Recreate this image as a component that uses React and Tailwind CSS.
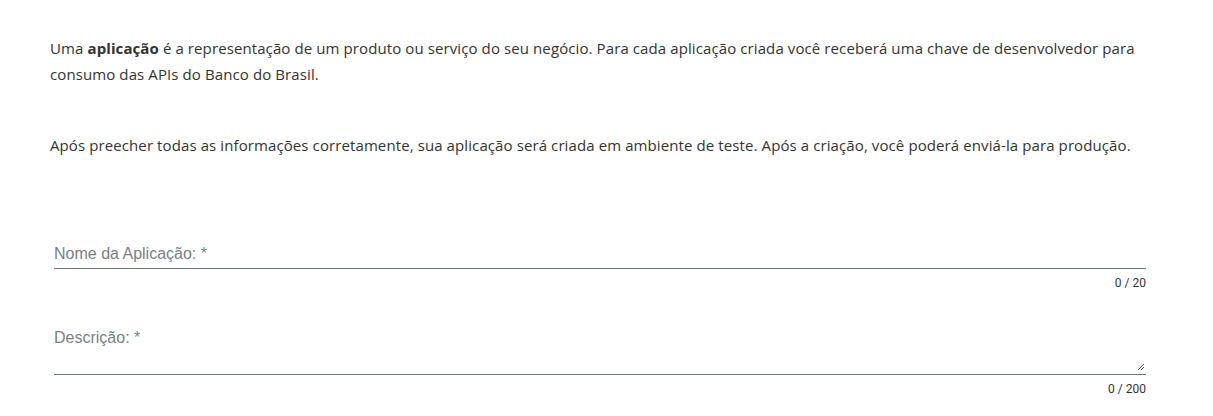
import React from 'react';

const Field = ({ label, max, multiline = false }) => (
  <div className="ml-1 flex flex-col">
    {multiline ? (
      <div className="relative h-[57px] border-b border-[#6b7785]">
        <span className="absolute left-0 top-[11px] text-[16px] leading-[18px] text-[#7a7f87]" style={{ fontFamily: '"Liberation Sans", Arial, sans-serif' }}>
          {label}
        </span>
        <svg className="absolute right-[1px] bottom-[3px]" width="8" height="8" viewBox="0 0 8 8">
          <path d="M7 1 L1 7 M7 4 L4 7" stroke="#555" strokeWidth="1" />
        </svg>
      </div>
    ) : (
      <div className="h-[36px] border-b border-[#6b7785] flex items-end pb-[5px]">
        <span className="text-[16px] leading-[18px] text-[#7a7f87]" style={{ fontFamily: '"Liberation Sans", Arial, sans-serif' }}>
          {label}
        </span>
      </div>
    )}
    <div className="text-right text-[12px] text-[#333] mt-[7px] leading-[14px]" style={{ fontFamily: 'Roboto, sans-serif' }}>
      0 / {max}
    </div>
  </div>
);

export default function App() {
  return (
    <div className="bg-white w-[1213px] h-[416px] pl-[50px] pr-[67px] pt-[35px]" style={{ fontFamily: '"Open Sans", sans-serif' }}>
      <p className="text-[15px] leading-[26px] tracking-[0.1px] text-[#333]">
        Uma <b className="font-bold">aplicação</b> é a representação de um produto ou serviço do seu negócio. Para cada aplicação criada você receberá uma chave de desenvolvedor para consumo das APIs do Banco do Brasil.
      </p>
      <p className="text-[15px] leading-[26px] tracking-[0.1px] text-[#333] mt-[45px]">
        Após preecher todas as informações corretamente, sua aplicação será criada em ambiente de teste. Após a criação, você poderá enviá-la para produção.
      </p>
      <div className="mt-[75px]">
        <Field label="Nome da Aplicação: *" max="20" />
      </div>
      <div className="mt-[28px]">
        <Field label="Descrição: *" max="200" multiline />
      </div>
    </div>
  );
}
